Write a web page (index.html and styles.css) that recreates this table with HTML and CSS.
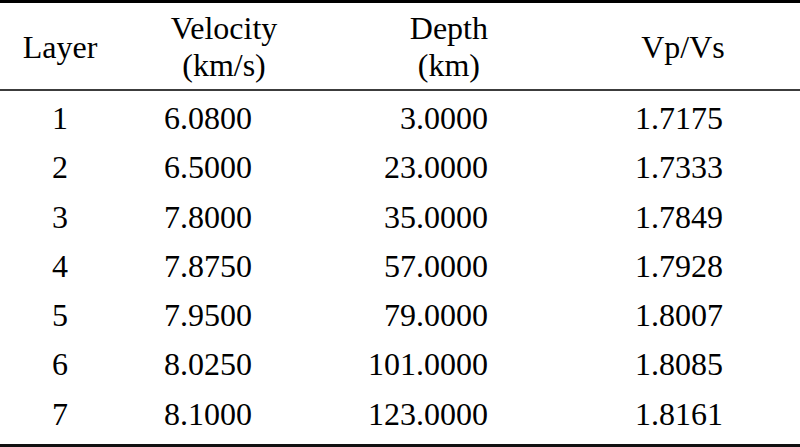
FILE: index.html
```html
<!DOCTYPE html>
<html>
<head>
<meta charset="utf-8">
<link rel="stylesheet" href="styles.css">
</head>
<body>
<div class="frame">
<table class="model">
  <colgroup>
    <col class="c-layer">
    <col class="c-vel">
    <col class="c-depth">
    <col class="c-ratio">
  </colgroup>
  <thead>
    <tr>
      <th class="h-layer">Layer</th>
      <th class="h-vel"><span class="stack">Velocity<br>(km/s)</span></th>
      <th class="h-depth"><span class="stack">Depth<br>(km)</span></th>
      <th class="h-ratio">Vp/Vs</th>
    </tr>
  </thead>
  <tbody>
    <tr><td class="d-layer">1</td><td class="d-vel">6.0800</td><td class="d-depth">3.0000</td><td class="d-ratio">1.7175</td></tr>
    <tr><td class="d-layer">2</td><td class="d-vel">6.5000</td><td class="d-depth">23.0000</td><td class="d-ratio">1.7333</td></tr>
    <tr><td class="d-layer">3</td><td class="d-vel">7.8000</td><td class="d-depth">35.0000</td><td class="d-ratio">1.7849</td></tr>
    <tr><td class="d-layer">4</td><td class="d-vel">7.8750</td><td class="d-depth">57.0000</td><td class="d-ratio">1.7928</td></tr>
    <tr><td class="d-layer">5</td><td class="d-vel">7.9500</td><td class="d-depth">79.0000</td><td class="d-ratio">1.8007</td></tr>
    <tr><td class="d-layer">6</td><td class="d-vel">8.0250</td><td class="d-depth">101.0000</td><td class="d-ratio">1.8085</td></tr>
    <tr><td class="d-layer">7</td><td class="d-vel">8.1000</td><td class="d-depth">123.0000</td><td class="d-ratio">1.8161</td></tr>
  </tbody>
</table>
</div>
</body>
</html>
```

FILE: styles.css
```css
html, body {
  margin: 0;
  padding: 0;
  background: #ffffff;
}

.frame {
  width: 800px;
  height: 447px;
  box-sizing: border-box;
  border-top: 3px solid #000000;
  border-bottom: 3px solid #111111;
  overflow: hidden;
}

.model {
  width: 800px;
  table-layout: fixed;
  border-spacing: 0;
  border-collapse: separate;
  font-family: "Liberation Serif", "Times New Roman", serif;
  font-size: 32px;
  color: #000000;
}

.c-layer { width: 120px; }
.c-vel { width: 208px; }
.c-depth { width: 230px; }
.c-ratio { width: 242px; }

.model th {
  font-weight: normal;
  line-height: 37px;
  padding: 7px 0 5px 0;
  vertical-align: middle;
  border-bottom: 2px solid #3c3c3c;
}

.stack {
  display: inline-block;
  text-align: center;
}

.h-layer { text-align: center; padding-top: 10px; }
.h-vel { text-align: center; }
.h-depth { text-align: right; padding-right: 70px !important; }
.h-ratio { text-align: center; padding-top: 10px; padding-left: 8px !important; }

.model td {
  padding: 0;
  line-height: 49.3px;
  white-space: nowrap;
}

.model tbody tr:first-child td { padding-top: 3px; }
.model tbody tr:last-child td { padding-bottom: 5px; }

.d-layer { text-align: center; }
.d-vel { text-align: left; padding-left: 44px !important; }
.d-depth { text-align: right; padding-right: 70px !important; }
.d-ratio { text-align: center; }
```
